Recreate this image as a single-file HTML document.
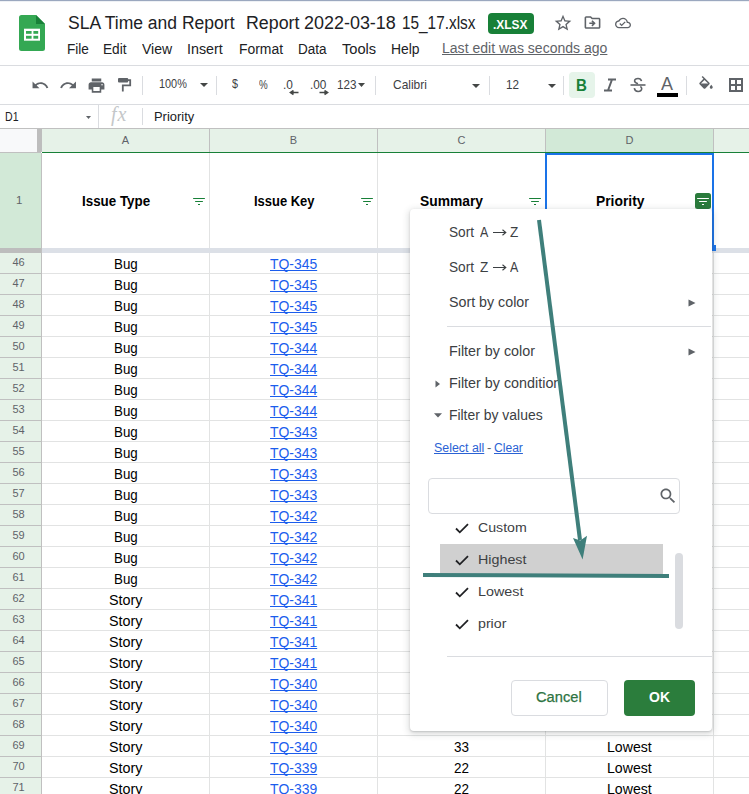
<!DOCTYPE html><html><head><meta charset="utf-8"><style>
html,body{margin:0;padding:0;}
body{width:749px;height:794px;overflow:hidden;position:relative;background:#fff;font-family:"Liberation Sans",sans-serif;}
.t{position:absolute;white-space:nowrap;line-height:1;transform-origin:0 0;}
.r{position:absolute;box-sizing:border-box;}
svg.r{display:block;}
</style></head><body>
<div class="r" style="left:0px;top:0px;width:749px;height:1px;background:#9ba8bf;"></div>
<div class="r" style="left:0px;top:1px;width:749px;height:1px;background:#eef1f5;"></div>
<svg class="r" style="left:19px;top:15px" width="26" height="36" viewBox="0 0 26 36">
<path d="M2.5 0H17L26 9V33.5A2.5 2.5 0 0 1 23.5 36H2.5A2.5 2.5 0 0 1 0 33.5V2.5A2.5 2.5 0 0 1 2.5 0Z" fill="#34a853"/>
<path d="M17 0L26 9H17Z" fill="#188038"/>
<rect x="5" y="13.7" width="16" height="12" fill="#fff"/>
<rect x="7" y="16" width="5.6" height="2.8" fill="#34a853"/>
<rect x="14.4" y="16" width="4.8" height="2.8" fill="#34a853"/>
<rect x="7" y="20.8" width="5.6" height="2.9" fill="#34a853"/>
<rect x="14.4" y="20.8" width="4.8" height="2.9" fill="#34a853"/>
</svg>
<div class="t" style="left:68.40px;top:13px;font-size:19.19px;color:#202124;transform:scaleX(0.9130);">SLA Time and Report</div>
<div class="t" style="left:246.00px;top:13px;font-size:19.19px;color:#202124;transform:scaleX(0.9274);">Report</div>
<div class="t" style="left:304.10px;top:13px;font-size:19.19px;color:#202124;transform:scaleX(0.9354);">2022-03-18</div>
<div class="t" style="left:401.90px;top:13px;font-size:19.19px;color:#202124;transform:scaleX(0.8002);">15_17.xlsx</div>
<div class="r" style="left:488px;top:13px;width:46px;height:21px;background:#188038;border-radius:4px;"></div>
<div class="t" style="left:493.30px;top:18px;font-size:13.23px;font-weight:bold;color:#fff;transform:scaleX(0.8999);">.XLSX</div>
<svg class="r" style="left:552.5px;top:13px" width="20" height="20" viewBox="0 0 24 24"><path fill="#5f6368" d="M22 9.24l-7.19-.62L12 2 9.19 8.63 2 9.24l5.46 4.73L5.82 21 12 17.27 18.18 21l-1.63-7.03L22 9.24zM12 15.4l-3.76 2.27 1-4.28-3.32-2.88 4.38-.38L12 6.1l1.71 4.04 4.38.38-3.32 2.88 1 4.28L12 15.4z"/></svg>
<svg class="r" style="left:583px;top:13px" width="19" height="19" viewBox="0 0 24 24"><path fill="#5f6368" d="M20 6h-8l-2-2H4c-1.1 0-1.99.9-1.99 2L2 18c0 1.1.9 2 2 2h16c1.1 0 2-.9 2-2V8c0-1.1-.9-2-2-2zm0 12H4V6h5.17l2 2H20v10zm-7.84-6H8v2h4.16l-1.59 1.59L11.99 17 16 13.01 11.99 9l-1.41 1.41L12.16 12z"/></svg>
<svg class="r" style="left:614.7px;top:15.3px" width="16" height="16" viewBox="0 0 24 24"><path fill="#5f6368" d="M19.35 10.04C18.67 6.59 15.64 4 12 4 9.11 4 6.6 5.64 5.35 8.04 2.34 8.36 0 10.91 0 14c0 3.31 2.69 6 6 6h13c2.76 0 5-2.24 5-5 0-2.64-2.05-4.78-4.65-4.96zM19 18H6c-2.21 0-4-1.79-4-4 0-2.05 1.53-3.76 3.56-3.97l1.07-.11.5-.95C8.08 7.14 9.94 6 12 6c2.62 0 4.88 1.86 5.39 4.43l.3 1.5 1.53.11c1.56.1 2.78 1.41 2.78 2.96 0 1.65-1.35 3-3 3zm-9-3.82l-2.09-2.09L6.5 13.5 10 17l6.01-6.01-1.41-1.41z"/></svg>
<div class="t" style="left:66.70px;top:42px;font-size:14.53px;color:#202124;transform:scaleX(0.9353);">File</div>
<div class="t" style="left:103.20px;top:42px;font-size:14.53px;color:#202124;transform:scaleX(0.9424);">Edit</div>
<div class="t" style="left:142.00px;top:42px;font-size:14.53px;color:#202124;transform:scaleX(0.9655);">View</div>
<div class="t" style="left:186.80px;top:42px;font-size:14.53px;color:#202124;transform:scaleX(0.9848);">Insert</div>
<div class="t" style="left:238.50px;top:42px;font-size:14.53px;color:#202124;transform:scaleX(0.9580);">Format</div>
<div class="t" style="left:298.10px;top:42px;font-size:14.53px;color:#202124;transform:scaleX(0.9312);">Data</div>
<div class="t" style="left:341.90px;top:42px;font-size:14.53px;color:#202124;transform:scaleX(1.0081);">Tools</div>
<div class="t" style="left:390.70px;top:42px;font-size:14.53px;color:#202124;transform:scaleX(0.9566);">Help</div>
<div class="t" style="left:442.00px;top:41px;font-size:14.53px;color:#5f6368;transform:scaleX(0.9668);text-decoration:underline;text-underline-offset:1px;">Last edit was seconds ago</div>
<div class="r" style="left:0px;top:65px;width:749px;height:1px;background:#dadce0;"></div>
<svg class="r" style="left:30.5px;top:75.8px" width="18.5" height="18.5" viewBox="0 0 24 24"><path fill="#5f6368" d="M12.5 8c-2.65 0-5.05.99-6.9 2.6L2 7v9h9l-3.62-3.62c1.39-1.160 3.16-1.88 5.12-1.88 3.54 0 6.55 2.31 7.6 5.5l2.37-.78C21.08 11.03 17.15 8 12.5 8z"/></svg>
<svg class="r" style="left:59.1px;top:75.8px" width="18.5" height="18.5" viewBox="0 0 24 24"><path fill="#5f6368" d="M18.4 10.6C16.55 8.99 14.15 8 11.5 8c-4.65 0-8.58 3.03-9.96 7.22L3.9 16c1.05-3.19 4.05-5.5 7.6-5.5 1.95 0 3.73.72 5.12 1.88L13 16h9V7l-3.6 3.6z"/></svg>
<svg class="r" style="left:86.5px;top:75.6px" width="19" height="19" viewBox="0 0 24 24"><path fill="#5f6368" d="M19 8H5c-1.66 0-3 1.34-3 3v6h4v4h12v-4h4v-6c0-1.66-1.34-3-3-3zm-3 11H8v-5h8v5zm3-7c-.55 0-1-.45-1-1s.45-1 1-1 1 .45 1 1-.45 1-1 1zm-1-9H6v4h12V3z"/></svg>
<svg class="r" style="left:110px;top:70px" width="30" height="30" viewBox="110 70 30 30"><rect x="118" y="78" width="10.2" height="4.5" rx="1" fill="#5f6368"/><path d="M128 80.2H130.2V85.3H122.8V91.6" stroke="#5f6368" stroke-width="1.8" fill="none"/></svg>
<div class="r" style="left:142px;top:76px;width:1px;height:19px;background:#dadce0;"></div>
<div class="t" style="left:158.90px;top:78px;font-size:12.06px;color:#3c4043;transform:scaleX(0.9041);">100%</div>
<svg class="r" style="left:200px;top:83px" width="8" height="4" viewBox="0 0 8 4"><path d="M0 0H8L4.0 4Z" fill="#444746"/></svg>
<div class="r" style="left:216px;top:76px;width:1px;height:19px;background:#dadce0;"></div>
<div class="t" style="left:232.00px;top:78px;font-size:12.35px;color:#3c4043;transform:scaleX(0.8735);">$</div>
<div class="t" style="left:258.70px;top:79px;font-size:12.06px;color:#3c4043;transform:scaleX(0.8112);">%</div>
<div class="t" style="left:282.60px;top:79px;font-size:12.06px;color:#3c4043;transform:scaleX(0.9840);">.0</div>
<svg class="r" style="left:289px;top:90px" width="10" height="6" viewBox="0 0 10 6"><path d="M9.5 2.5H3M4.5 0.5L1.5 2.5 4.5 4.5" stroke="#444746" stroke-width="1.6" fill="none"/></svg>
<div class="t" style="left:310.00px;top:79px;font-size:12.06px;color:#3c4043;transform:scaleX(0.9780);">.00</div>
<svg class="r" style="left:319px;top:90px" width="10" height="6" viewBox="0 0 10 6"><path d="M0.5 2.5H7M5.5 0.5L8.5 2.5 5.5 4.5" stroke="#444746" stroke-width="1.6" fill="none"/></svg>
<div class="t" style="left:336.80px;top:79px;font-size:12.06px;color:#3c4043;transform:scaleX(0.9691);">123</div>
<svg class="r" style="left:358px;top:83px" width="7" height="4" viewBox="0 0 7 4"><path d="M0 0H7L3.5 4Z" fill="#444746"/></svg>
<div class="r" style="left:375px;top:76px;width:1px;height:19px;background:#dadce0;"></div>
<div class="t" style="left:392.70px;top:78px;font-size:13.00px;color:#3c4043;transform:scaleX(0.9201);">Calibri</div>
<svg class="r" style="left:472px;top:84px" width="8" height="4" viewBox="0 0 8 4"><path d="M0 0H8L4.0 4Z" fill="#444746"/></svg>
<div class="r" style="left:489px;top:76px;width:1px;height:19px;background:#dadce0;"></div>
<div class="t" style="left:506.00px;top:79px;font-size:12.06px;color:#3c4043;transform:scaleX(0.9691);">12</div>
<svg class="r" style="left:548px;top:84px" width="8" height="4" viewBox="0 0 8 4"><path d="M0 0H8L4.0 4Z" fill="#444746"/></svg>
<div class="r" style="left:563px;top:76px;width:1px;height:19px;background:#dadce0;"></div>
<div class="r" style="left:569px;top:72px;width:26px;height:26px;background:#e6f4ea;border-radius:4px;"></div>
<div class="t" style="left:576.40px;top:78px;font-size:15.70px;font-weight:bold;color:#188038;transform:scaleX(0.9617);">B</div>
<svg class="r" style="left:602px;top:78px" width="16" height="14" viewBox="0 0 16 14"><path d="M6 1.5H14M2 12.5H10M10 1.5L6 12.5" stroke="#5f6368" stroke-width="2" fill="none"/></svg>
<svg class="r" style="left:629px;top:77px" width="18" height="16" viewBox="0 0 18 16"><path d="M1.5 8H16.5" stroke="#5f6368" stroke-width="1.6"/><path d="M12.5 4.2C12.2 2.6 10.9 1.5 9 1.5 7 1.5 5.6 2.6 5.6 4.1 5.6 5.5 6.7 6.1 9 6.7M5.3 11.2C5.6 13 7 14.5 9.1 14.5 11.3 14.5 12.7 13.3 12.7 11.6 12.7 10.7 12.3 10 11.3 9.5" stroke="#5f6368" stroke-width="1.6" fill="none"/></svg>
<div class="t" style="left:661.00px;top:76px;font-size:17.44px;color:#5f6368;transform:scaleX(1.0315);">A</div>
<div class="r" style="left:657px;top:93px;width:21px;height:4px;background:#000;"></div>
<div class="r" style="left:686px;top:76px;width:1px;height:19px;background:#dadce0;"></div>
<svg class="r" style="left:697px;top:76px" width="18" height="18" viewBox="0 0 24 24"><path fill="#5f6368" d="M16.56 8.94L7.62 0 6.21 1.41l2.38 2.38-5.15 5.15c-.59.59-.59 1.54 0 2.12l5.5 5.5c.29.29.68.44 1.06.44s.77-.15 1.06-.44l5.5-5.5c.59-.58.59-1.53 0-2.12zM5.21 10L10 5.21 14.79 10H5.21zM19 11.5s-2 2.17-2 3.5c0 1.1.9 2 2 2s2-.9 2-2c0-1.33-2-3.5-2-3.5z"/></svg>
<svg class="r" style="left:729px;top:78px" width="14" height="14" viewBox="0 0 14 14"><path d="M1 1H13V13H1Z M7 1V13 M1 7H13" stroke="#5f6368" stroke-width="2" fill="none"/></svg>
<div class="r" style="left:0px;top:104px;width:749px;height:1px;background:#dadce0;"></div>
<div class="t" style="left:4.70px;top:110px;font-size:13.08px;color:#202124;transform:scaleX(0.8075);">D1</div>
<svg class="r" style="left:86px;top:116px" width="5" height="3" viewBox="0 0 5 3"><path d="M0 0H5L2.5 3Z" fill="#5f6368"/></svg>
<div class="r" style="left:98px;top:105px;width:1px;height:23px;background:#dadce0;"></div>
<div class="t" style="left:111px;top:104px;font-size:20px;letter-spacing:1px;line-height:1;color:#c4c7c9;font-family:'Liberation Serif',serif;font-style:italic;">fx</div>
<div class="r" style="left:142px;top:108px;width:1px;height:17px;background:#dadce0;"></div>
<div class="t" style="left:153.80px;top:110px;font-size:13.08px;color:#202124;transform:scaleX(0.9878);">Priority</div>
<div class="r" style="left:0px;top:128px;width:749px;height:1px;background:#c0c0c0;"></div>
<div class="r" style="left:0px;top:129px;width:37px;height:23px;background:#f8f9fa;"></div>
<div class="r" style="left:37px;top:129px;width:5px;height:23px;background:#bdbdbd;"></div>
<div class="r" style="left:42px;top:129px;width:707px;height:23px;background:#e6f2e8;"></div>
<div class="r" style="left:546px;top:129px;width:167px;height:23px;background:#d2e9d7;"></div>
<div class="r" style="left:209px;top:129px;width:1px;height:23px;background:#c0c0c0;"></div>
<div class="r" style="left:377px;top:129px;width:1px;height:23px;background:#c0c0c0;"></div>
<div class="r" style="left:545px;top:129px;width:1px;height:23px;background:#c0c0c0;"></div>
<div class="r" style="left:713px;top:129px;width:1px;height:23px;background:#c0c0c0;"></div>
<div class="r" style="left:0px;top:152px;width:41px;height:1px;background:#c0c0c0;"></div>
<div class="r" style="left:42px;top:152px;width:707px;height:1px;background:#188038;"></div>
<div class="t" style="left:121.83px;top:135px;font-size:11.00px;color:#5f6368;">A</div>
<div class="t" style="left:289.83px;top:135px;font-size:11.00px;color:#5f6368;">B</div>
<div class="t" style="left:457.53px;top:135px;font-size:11.00px;color:#5f6368;">C</div>
<div class="t" style="left:625.53px;top:135px;font-size:11.00px;color:#5f6368;">D</div>
<div class="r" style="left:0px;top:153px;width:41px;height:95px;background:#d2e9d7;"></div>
<div class="r" style="left:41px;top:153px;width:1px;height:95px;background:#c0c0c0;"></div>
<div class="r" style="left:209px;top:153px;width:1px;height:95px;background:#e2e3e3;"></div>
<div class="r" style="left:377px;top:153px;width:1px;height:95px;background:#e2e3e3;"></div>
<div class="r" style="left:545px;top:153px;width:1px;height:95px;background:#e2e3e3;"></div>
<div class="r" style="left:713px;top:153px;width:1px;height:95px;background:#e2e3e3;"></div>
<div class="t" style="left:15.90px;top:195px;font-size:11.50px;color:#5f6368;">1</div>
<div class="t" style="left:81.60px;top:194px;font-size:14.24px;font-weight:bold;color:#000;transform:scaleX(0.9397);">Issue Type</div>
<div class="t" style="left:253.60px;top:194px;font-size:14.24px;font-weight:bold;color:#000;transform:scaleX(0.9097);">Issue Key</div>
<div class="t" style="left:420.00px;top:194px;font-size:14.24px;font-weight:bold;color:#000;transform:scaleX(0.9719);">Summary</div>
<div class="t" style="left:595.60px;top:194px;font-size:14.24px;font-weight:bold;color:#000;transform:scaleX(0.9726);">Priority</div>
<div class="r" style="left:193px;top:198px;width:12px;height:1px;background:#188038;border-radius:1px;"></div>
<div class="r" style="left:195px;top:201px;width:8px;height:1px;background:#188038;border-radius:1px;"></div>
<div class="r" style="left:198px;top:204px;width:2px;height:1px;background:#188038;"></div>
<div class="r" style="left:361px;top:198px;width:12px;height:1px;background:#188038;border-radius:1px;"></div>
<div class="r" style="left:363px;top:201px;width:8px;height:1px;background:#188038;border-radius:1px;"></div>
<div class="r" style="left:366px;top:204px;width:2px;height:1px;background:#188038;"></div>
<div class="r" style="left:529px;top:198px;width:12px;height:1px;background:#188038;border-radius:1px;"></div>
<div class="r" style="left:531px;top:201px;width:8px;height:1px;background:#188038;border-radius:1px;"></div>
<div class="r" style="left:534px;top:204px;width:2px;height:1px;background:#188038;"></div>
<div class="r" style="left:695px;top:193px;width:16px;height:16px;background:#2a7b3c;border-radius:2.5px;"></div>
<div class="r" style="left:697px;top:198px;width:12px;height:1px;background:#fff;border-radius:1px;"></div>
<div class="r" style="left:699px;top:201px;width:8px;height:1px;background:#fff;border-radius:1px;"></div>
<div class="r" style="left:702px;top:204px;width:2px;height:1px;background:#fff;"></div>
<div class="r" style="left:0px;top:248px;width:41px;height:5px;background:#bdbdbd;"></div>
<div class="r" style="left:41px;top:248px;width:708px;height:5px;background:#dce0e7;"></div>
<div class="r" style="left:41px;top:248px;width:1px;height:5px;background:#c0c0c0;"></div>
<div class="r" style="left:545px;top:153px;width:2px;height:95px;background:#1a73e8;"></div>
<div class="r" style="left:712px;top:153px;width:2px;height:95px;background:#1a73e8;"></div>
<div class="r" style="left:545px;top:153px;width:169px;height:2px;background:#1a73e8;"></div>
<div class="r" style="left:712px;top:245px;width:4px;height:6px;background:#1a73e8;"></div>
<div class="r" style="left:0px;top:253px;width:41px;height:20px;background:#e6f2e8;"></div>
<div class="r" style="left:0px;top:273px;width:41px;height:1px;background:#c0c0c0;"></div>
<div class="r" style="left:41px;top:253px;width:1px;height:21px;background:#c0c0c0;"></div>
<div class="r" style="left:42px;top:273px;width:707px;height:1px;background:#e2e3e3;"></div>
<div class="r" style="left:209px;top:253px;width:1px;height:20px;background:#e2e3e3;"></div>
<div class="r" style="left:377px;top:253px;width:1px;height:20px;background:#e2e3e3;"></div>
<div class="r" style="left:545px;top:253px;width:1px;height:20px;background:#e2e3e3;"></div>
<div class="r" style="left:713px;top:253px;width:1px;height:20px;background:#e2e3e3;"></div>
<div class="t" style="left:12.38px;top:257px;font-size:11.00px;color:#5f6368;">46</div>
<div class="r" style="left:0px;top:274px;width:41px;height:20px;background:#e6f2e8;"></div>
<div class="r" style="left:0px;top:294px;width:41px;height:1px;background:#c0c0c0;"></div>
<div class="r" style="left:41px;top:274px;width:1px;height:21px;background:#c0c0c0;"></div>
<div class="r" style="left:42px;top:294px;width:707px;height:1px;background:#e2e3e3;"></div>
<div class="r" style="left:209px;top:274px;width:1px;height:20px;background:#e2e3e3;"></div>
<div class="r" style="left:377px;top:274px;width:1px;height:20px;background:#e2e3e3;"></div>
<div class="r" style="left:545px;top:274px;width:1px;height:20px;background:#e2e3e3;"></div>
<div class="r" style="left:713px;top:274px;width:1px;height:20px;background:#e2e3e3;"></div>
<div class="t" style="left:12.38px;top:278px;font-size:11.00px;color:#5f6368;">47</div>
<div class="r" style="left:0px;top:295px;width:41px;height:20px;background:#e6f2e8;"></div>
<div class="r" style="left:0px;top:315px;width:41px;height:1px;background:#c0c0c0;"></div>
<div class="r" style="left:41px;top:295px;width:1px;height:21px;background:#c0c0c0;"></div>
<div class="r" style="left:42px;top:315px;width:707px;height:1px;background:#e2e3e3;"></div>
<div class="r" style="left:209px;top:295px;width:1px;height:20px;background:#e2e3e3;"></div>
<div class="r" style="left:377px;top:295px;width:1px;height:20px;background:#e2e3e3;"></div>
<div class="r" style="left:545px;top:295px;width:1px;height:20px;background:#e2e3e3;"></div>
<div class="r" style="left:713px;top:295px;width:1px;height:20px;background:#e2e3e3;"></div>
<div class="t" style="left:12.38px;top:299px;font-size:11.00px;color:#5f6368;">48</div>
<div class="r" style="left:0px;top:316px;width:41px;height:20px;background:#e6f2e8;"></div>
<div class="r" style="left:0px;top:336px;width:41px;height:1px;background:#c0c0c0;"></div>
<div class="r" style="left:41px;top:316px;width:1px;height:21px;background:#c0c0c0;"></div>
<div class="r" style="left:42px;top:336px;width:707px;height:1px;background:#e2e3e3;"></div>
<div class="r" style="left:209px;top:316px;width:1px;height:20px;background:#e2e3e3;"></div>
<div class="r" style="left:377px;top:316px;width:1px;height:20px;background:#e2e3e3;"></div>
<div class="r" style="left:545px;top:316px;width:1px;height:20px;background:#e2e3e3;"></div>
<div class="r" style="left:713px;top:316px;width:1px;height:20px;background:#e2e3e3;"></div>
<div class="t" style="left:12.38px;top:320px;font-size:11.00px;color:#5f6368;">49</div>
<div class="r" style="left:0px;top:337px;width:41px;height:20px;background:#e6f2e8;"></div>
<div class="r" style="left:0px;top:357px;width:41px;height:1px;background:#c0c0c0;"></div>
<div class="r" style="left:41px;top:337px;width:1px;height:21px;background:#c0c0c0;"></div>
<div class="r" style="left:42px;top:357px;width:707px;height:1px;background:#e2e3e3;"></div>
<div class="r" style="left:209px;top:337px;width:1px;height:20px;background:#e2e3e3;"></div>
<div class="r" style="left:377px;top:337px;width:1px;height:20px;background:#e2e3e3;"></div>
<div class="r" style="left:545px;top:337px;width:1px;height:20px;background:#e2e3e3;"></div>
<div class="r" style="left:713px;top:337px;width:1px;height:20px;background:#e2e3e3;"></div>
<div class="t" style="left:12.38px;top:341px;font-size:11.00px;color:#5f6368;">50</div>
<div class="r" style="left:0px;top:358px;width:41px;height:20px;background:#e6f2e8;"></div>
<div class="r" style="left:0px;top:378px;width:41px;height:1px;background:#c0c0c0;"></div>
<div class="r" style="left:41px;top:358px;width:1px;height:21px;background:#c0c0c0;"></div>
<div class="r" style="left:42px;top:378px;width:707px;height:1px;background:#e2e3e3;"></div>
<div class="r" style="left:209px;top:358px;width:1px;height:20px;background:#e2e3e3;"></div>
<div class="r" style="left:377px;top:358px;width:1px;height:20px;background:#e2e3e3;"></div>
<div class="r" style="left:545px;top:358px;width:1px;height:20px;background:#e2e3e3;"></div>
<div class="r" style="left:713px;top:358px;width:1px;height:20px;background:#e2e3e3;"></div>
<div class="t" style="left:12.38px;top:362px;font-size:11.00px;color:#5f6368;">51</div>
<div class="r" style="left:0px;top:379px;width:41px;height:20px;background:#e6f2e8;"></div>
<div class="r" style="left:0px;top:399px;width:41px;height:1px;background:#c0c0c0;"></div>
<div class="r" style="left:41px;top:379px;width:1px;height:21px;background:#c0c0c0;"></div>
<div class="r" style="left:42px;top:399px;width:707px;height:1px;background:#e2e3e3;"></div>
<div class="r" style="left:209px;top:379px;width:1px;height:20px;background:#e2e3e3;"></div>
<div class="r" style="left:377px;top:379px;width:1px;height:20px;background:#e2e3e3;"></div>
<div class="r" style="left:545px;top:379px;width:1px;height:20px;background:#e2e3e3;"></div>
<div class="r" style="left:713px;top:379px;width:1px;height:20px;background:#e2e3e3;"></div>
<div class="t" style="left:12.38px;top:383px;font-size:11.00px;color:#5f6368;">52</div>
<div class="r" style="left:0px;top:400px;width:41px;height:20px;background:#e6f2e8;"></div>
<div class="r" style="left:0px;top:420px;width:41px;height:1px;background:#c0c0c0;"></div>
<div class="r" style="left:41px;top:400px;width:1px;height:21px;background:#c0c0c0;"></div>
<div class="r" style="left:42px;top:420px;width:707px;height:1px;background:#e2e3e3;"></div>
<div class="r" style="left:209px;top:400px;width:1px;height:20px;background:#e2e3e3;"></div>
<div class="r" style="left:377px;top:400px;width:1px;height:20px;background:#e2e3e3;"></div>
<div class="r" style="left:545px;top:400px;width:1px;height:20px;background:#e2e3e3;"></div>
<div class="r" style="left:713px;top:400px;width:1px;height:20px;background:#e2e3e3;"></div>
<div class="t" style="left:12.38px;top:404px;font-size:11.00px;color:#5f6368;">53</div>
<div class="r" style="left:0px;top:421px;width:41px;height:20px;background:#e6f2e8;"></div>
<div class="r" style="left:0px;top:441px;width:41px;height:1px;background:#c0c0c0;"></div>
<div class="r" style="left:41px;top:421px;width:1px;height:21px;background:#c0c0c0;"></div>
<div class="r" style="left:42px;top:441px;width:707px;height:1px;background:#e2e3e3;"></div>
<div class="r" style="left:209px;top:421px;width:1px;height:20px;background:#e2e3e3;"></div>
<div class="r" style="left:377px;top:421px;width:1px;height:20px;background:#e2e3e3;"></div>
<div class="r" style="left:545px;top:421px;width:1px;height:20px;background:#e2e3e3;"></div>
<div class="r" style="left:713px;top:421px;width:1px;height:20px;background:#e2e3e3;"></div>
<div class="t" style="left:12.38px;top:425px;font-size:11.00px;color:#5f6368;">54</div>
<div class="r" style="left:0px;top:442px;width:41px;height:20px;background:#e6f2e8;"></div>
<div class="r" style="left:0px;top:462px;width:41px;height:1px;background:#c0c0c0;"></div>
<div class="r" style="left:41px;top:442px;width:1px;height:21px;background:#c0c0c0;"></div>
<div class="r" style="left:42px;top:462px;width:707px;height:1px;background:#e2e3e3;"></div>
<div class="r" style="left:209px;top:442px;width:1px;height:20px;background:#e2e3e3;"></div>
<div class="r" style="left:377px;top:442px;width:1px;height:20px;background:#e2e3e3;"></div>
<div class="r" style="left:545px;top:442px;width:1px;height:20px;background:#e2e3e3;"></div>
<div class="r" style="left:713px;top:442px;width:1px;height:20px;background:#e2e3e3;"></div>
<div class="t" style="left:12.38px;top:446px;font-size:11.00px;color:#5f6368;">55</div>
<div class="r" style="left:0px;top:463px;width:41px;height:20px;background:#e6f2e8;"></div>
<div class="r" style="left:0px;top:483px;width:41px;height:1px;background:#c0c0c0;"></div>
<div class="r" style="left:41px;top:463px;width:1px;height:21px;background:#c0c0c0;"></div>
<div class="r" style="left:42px;top:483px;width:707px;height:1px;background:#e2e3e3;"></div>
<div class="r" style="left:209px;top:463px;width:1px;height:20px;background:#e2e3e3;"></div>
<div class="r" style="left:377px;top:463px;width:1px;height:20px;background:#e2e3e3;"></div>
<div class="r" style="left:545px;top:463px;width:1px;height:20px;background:#e2e3e3;"></div>
<div class="r" style="left:713px;top:463px;width:1px;height:20px;background:#e2e3e3;"></div>
<div class="t" style="left:12.38px;top:467px;font-size:11.00px;color:#5f6368;">56</div>
<div class="r" style="left:0px;top:484px;width:41px;height:20px;background:#e6f2e8;"></div>
<div class="r" style="left:0px;top:504px;width:41px;height:1px;background:#c0c0c0;"></div>
<div class="r" style="left:41px;top:484px;width:1px;height:21px;background:#c0c0c0;"></div>
<div class="r" style="left:42px;top:504px;width:707px;height:1px;background:#e2e3e3;"></div>
<div class="r" style="left:209px;top:484px;width:1px;height:20px;background:#e2e3e3;"></div>
<div class="r" style="left:377px;top:484px;width:1px;height:20px;background:#e2e3e3;"></div>
<div class="r" style="left:545px;top:484px;width:1px;height:20px;background:#e2e3e3;"></div>
<div class="r" style="left:713px;top:484px;width:1px;height:20px;background:#e2e3e3;"></div>
<div class="t" style="left:12.38px;top:488px;font-size:11.00px;color:#5f6368;">57</div>
<div class="r" style="left:0px;top:505px;width:41px;height:20px;background:#e6f2e8;"></div>
<div class="r" style="left:0px;top:525px;width:41px;height:1px;background:#c0c0c0;"></div>
<div class="r" style="left:41px;top:505px;width:1px;height:21px;background:#c0c0c0;"></div>
<div class="r" style="left:42px;top:525px;width:707px;height:1px;background:#e2e3e3;"></div>
<div class="r" style="left:209px;top:505px;width:1px;height:20px;background:#e2e3e3;"></div>
<div class="r" style="left:377px;top:505px;width:1px;height:20px;background:#e2e3e3;"></div>
<div class="r" style="left:545px;top:505px;width:1px;height:20px;background:#e2e3e3;"></div>
<div class="r" style="left:713px;top:505px;width:1px;height:20px;background:#e2e3e3;"></div>
<div class="t" style="left:12.38px;top:509px;font-size:11.00px;color:#5f6368;">58</div>
<div class="r" style="left:0px;top:526px;width:41px;height:20px;background:#e6f2e8;"></div>
<div class="r" style="left:0px;top:546px;width:41px;height:1px;background:#c0c0c0;"></div>
<div class="r" style="left:41px;top:526px;width:1px;height:21px;background:#c0c0c0;"></div>
<div class="r" style="left:42px;top:546px;width:707px;height:1px;background:#e2e3e3;"></div>
<div class="r" style="left:209px;top:526px;width:1px;height:20px;background:#e2e3e3;"></div>
<div class="r" style="left:377px;top:526px;width:1px;height:20px;background:#e2e3e3;"></div>
<div class="r" style="left:545px;top:526px;width:1px;height:20px;background:#e2e3e3;"></div>
<div class="r" style="left:713px;top:526px;width:1px;height:20px;background:#e2e3e3;"></div>
<div class="t" style="left:12.38px;top:530px;font-size:11.00px;color:#5f6368;">59</div>
<div class="r" style="left:0px;top:547px;width:41px;height:20px;background:#e6f2e8;"></div>
<div class="r" style="left:0px;top:567px;width:41px;height:1px;background:#c0c0c0;"></div>
<div class="r" style="left:41px;top:547px;width:1px;height:21px;background:#c0c0c0;"></div>
<div class="r" style="left:42px;top:567px;width:707px;height:1px;background:#e2e3e3;"></div>
<div class="r" style="left:209px;top:547px;width:1px;height:20px;background:#e2e3e3;"></div>
<div class="r" style="left:377px;top:547px;width:1px;height:20px;background:#e2e3e3;"></div>
<div class="r" style="left:545px;top:547px;width:1px;height:20px;background:#e2e3e3;"></div>
<div class="r" style="left:713px;top:547px;width:1px;height:20px;background:#e2e3e3;"></div>
<div class="t" style="left:12.38px;top:551px;font-size:11.00px;color:#5f6368;">60</div>
<div class="r" style="left:0px;top:568px;width:41px;height:20px;background:#e6f2e8;"></div>
<div class="r" style="left:0px;top:588px;width:41px;height:1px;background:#c0c0c0;"></div>
<div class="r" style="left:41px;top:568px;width:1px;height:21px;background:#c0c0c0;"></div>
<div class="r" style="left:42px;top:588px;width:707px;height:1px;background:#e2e3e3;"></div>
<div class="r" style="left:209px;top:568px;width:1px;height:20px;background:#e2e3e3;"></div>
<div class="r" style="left:377px;top:568px;width:1px;height:20px;background:#e2e3e3;"></div>
<div class="r" style="left:545px;top:568px;width:1px;height:20px;background:#e2e3e3;"></div>
<div class="r" style="left:713px;top:568px;width:1px;height:20px;background:#e2e3e3;"></div>
<div class="t" style="left:12.38px;top:572px;font-size:11.00px;color:#5f6368;">61</div>
<div class="r" style="left:0px;top:589px;width:41px;height:20px;background:#e6f2e8;"></div>
<div class="r" style="left:0px;top:609px;width:41px;height:1px;background:#c0c0c0;"></div>
<div class="r" style="left:41px;top:589px;width:1px;height:21px;background:#c0c0c0;"></div>
<div class="r" style="left:42px;top:609px;width:707px;height:1px;background:#e2e3e3;"></div>
<div class="r" style="left:209px;top:589px;width:1px;height:20px;background:#e2e3e3;"></div>
<div class="r" style="left:377px;top:589px;width:1px;height:20px;background:#e2e3e3;"></div>
<div class="r" style="left:545px;top:589px;width:1px;height:20px;background:#e2e3e3;"></div>
<div class="r" style="left:713px;top:589px;width:1px;height:20px;background:#e2e3e3;"></div>
<div class="t" style="left:12.38px;top:593px;font-size:11.00px;color:#5f6368;">62</div>
<div class="r" style="left:0px;top:610px;width:41px;height:20px;background:#e6f2e8;"></div>
<div class="r" style="left:0px;top:630px;width:41px;height:1px;background:#c0c0c0;"></div>
<div class="r" style="left:41px;top:610px;width:1px;height:21px;background:#c0c0c0;"></div>
<div class="r" style="left:42px;top:630px;width:707px;height:1px;background:#e2e3e3;"></div>
<div class="r" style="left:209px;top:610px;width:1px;height:20px;background:#e2e3e3;"></div>
<div class="r" style="left:377px;top:610px;width:1px;height:20px;background:#e2e3e3;"></div>
<div class="r" style="left:545px;top:610px;width:1px;height:20px;background:#e2e3e3;"></div>
<div class="r" style="left:713px;top:610px;width:1px;height:20px;background:#e2e3e3;"></div>
<div class="t" style="left:12.38px;top:614px;font-size:11.00px;color:#5f6368;">63</div>
<div class="r" style="left:0px;top:631px;width:41px;height:20px;background:#e6f2e8;"></div>
<div class="r" style="left:0px;top:651px;width:41px;height:1px;background:#c0c0c0;"></div>
<div class="r" style="left:41px;top:631px;width:1px;height:21px;background:#c0c0c0;"></div>
<div class="r" style="left:42px;top:651px;width:707px;height:1px;background:#e2e3e3;"></div>
<div class="r" style="left:209px;top:631px;width:1px;height:20px;background:#e2e3e3;"></div>
<div class="r" style="left:377px;top:631px;width:1px;height:20px;background:#e2e3e3;"></div>
<div class="r" style="left:545px;top:631px;width:1px;height:20px;background:#e2e3e3;"></div>
<div class="r" style="left:713px;top:631px;width:1px;height:20px;background:#e2e3e3;"></div>
<div class="t" style="left:12.38px;top:635px;font-size:11.00px;color:#5f6368;">64</div>
<div class="r" style="left:0px;top:652px;width:41px;height:20px;background:#e6f2e8;"></div>
<div class="r" style="left:0px;top:672px;width:41px;height:1px;background:#c0c0c0;"></div>
<div class="r" style="left:41px;top:652px;width:1px;height:21px;background:#c0c0c0;"></div>
<div class="r" style="left:42px;top:672px;width:707px;height:1px;background:#e2e3e3;"></div>
<div class="r" style="left:209px;top:652px;width:1px;height:20px;background:#e2e3e3;"></div>
<div class="r" style="left:377px;top:652px;width:1px;height:20px;background:#e2e3e3;"></div>
<div class="r" style="left:545px;top:652px;width:1px;height:20px;background:#e2e3e3;"></div>
<div class="r" style="left:713px;top:652px;width:1px;height:20px;background:#e2e3e3;"></div>
<div class="t" style="left:12.38px;top:656px;font-size:11.00px;color:#5f6368;">65</div>
<div class="r" style="left:0px;top:673px;width:41px;height:20px;background:#e6f2e8;"></div>
<div class="r" style="left:0px;top:693px;width:41px;height:1px;background:#c0c0c0;"></div>
<div class="r" style="left:41px;top:673px;width:1px;height:21px;background:#c0c0c0;"></div>
<div class="r" style="left:42px;top:693px;width:707px;height:1px;background:#e2e3e3;"></div>
<div class="r" style="left:209px;top:673px;width:1px;height:20px;background:#e2e3e3;"></div>
<div class="r" style="left:377px;top:673px;width:1px;height:20px;background:#e2e3e3;"></div>
<div class="r" style="left:545px;top:673px;width:1px;height:20px;background:#e2e3e3;"></div>
<div class="r" style="left:713px;top:673px;width:1px;height:20px;background:#e2e3e3;"></div>
<div class="t" style="left:12.38px;top:677px;font-size:11.00px;color:#5f6368;">66</div>
<div class="r" style="left:0px;top:694px;width:41px;height:20px;background:#e6f2e8;"></div>
<div class="r" style="left:0px;top:714px;width:41px;height:1px;background:#c0c0c0;"></div>
<div class="r" style="left:41px;top:694px;width:1px;height:21px;background:#c0c0c0;"></div>
<div class="r" style="left:42px;top:714px;width:707px;height:1px;background:#e2e3e3;"></div>
<div class="r" style="left:209px;top:694px;width:1px;height:20px;background:#e2e3e3;"></div>
<div class="r" style="left:377px;top:694px;width:1px;height:20px;background:#e2e3e3;"></div>
<div class="r" style="left:545px;top:694px;width:1px;height:20px;background:#e2e3e3;"></div>
<div class="r" style="left:713px;top:694px;width:1px;height:20px;background:#e2e3e3;"></div>
<div class="t" style="left:12.38px;top:698px;font-size:11.00px;color:#5f6368;">67</div>
<div class="r" style="left:0px;top:715px;width:41px;height:20px;background:#e6f2e8;"></div>
<div class="r" style="left:0px;top:735px;width:41px;height:1px;background:#c0c0c0;"></div>
<div class="r" style="left:41px;top:715px;width:1px;height:21px;background:#c0c0c0;"></div>
<div class="r" style="left:42px;top:735px;width:707px;height:1px;background:#e2e3e3;"></div>
<div class="r" style="left:209px;top:715px;width:1px;height:20px;background:#e2e3e3;"></div>
<div class="r" style="left:377px;top:715px;width:1px;height:20px;background:#e2e3e3;"></div>
<div class="r" style="left:545px;top:715px;width:1px;height:20px;background:#e2e3e3;"></div>
<div class="r" style="left:713px;top:715px;width:1px;height:20px;background:#e2e3e3;"></div>
<div class="t" style="left:12.38px;top:719px;font-size:11.00px;color:#5f6368;">68</div>
<div class="r" style="left:0px;top:736px;width:41px;height:20px;background:#e6f2e8;"></div>
<div class="r" style="left:0px;top:756px;width:41px;height:1px;background:#c0c0c0;"></div>
<div class="r" style="left:41px;top:736px;width:1px;height:21px;background:#c0c0c0;"></div>
<div class="r" style="left:42px;top:756px;width:707px;height:1px;background:#e2e3e3;"></div>
<div class="r" style="left:209px;top:736px;width:1px;height:20px;background:#e2e3e3;"></div>
<div class="r" style="left:377px;top:736px;width:1px;height:20px;background:#e2e3e3;"></div>
<div class="r" style="left:545px;top:736px;width:1px;height:20px;background:#e2e3e3;"></div>
<div class="r" style="left:713px;top:736px;width:1px;height:20px;background:#e2e3e3;"></div>
<div class="t" style="left:12.38px;top:740px;font-size:11.00px;color:#5f6368;">69</div>
<div class="r" style="left:0px;top:757px;width:41px;height:20px;background:#e6f2e8;"></div>
<div class="r" style="left:0px;top:777px;width:41px;height:1px;background:#c0c0c0;"></div>
<div class="r" style="left:41px;top:757px;width:1px;height:21px;background:#c0c0c0;"></div>
<div class="r" style="left:42px;top:777px;width:707px;height:1px;background:#e2e3e3;"></div>
<div class="r" style="left:209px;top:757px;width:1px;height:20px;background:#e2e3e3;"></div>
<div class="r" style="left:377px;top:757px;width:1px;height:20px;background:#e2e3e3;"></div>
<div class="r" style="left:545px;top:757px;width:1px;height:20px;background:#e2e3e3;"></div>
<div class="r" style="left:713px;top:757px;width:1px;height:20px;background:#e2e3e3;"></div>
<div class="t" style="left:12.38px;top:761px;font-size:11.00px;color:#5f6368;">70</div>
<div class="r" style="left:0px;top:778px;width:41px;height:20px;background:#e6f2e8;"></div>
<div class="r" style="left:0px;top:798px;width:41px;height:1px;background:#c0c0c0;"></div>
<div class="r" style="left:41px;top:778px;width:1px;height:21px;background:#c0c0c0;"></div>
<div class="r" style="left:42px;top:798px;width:707px;height:1px;background:#e2e3e3;"></div>
<div class="r" style="left:209px;top:778px;width:1px;height:20px;background:#e2e3e3;"></div>
<div class="r" style="left:377px;top:778px;width:1px;height:20px;background:#e2e3e3;"></div>
<div class="r" style="left:545px;top:778px;width:1px;height:20px;background:#e2e3e3;"></div>
<div class="r" style="left:713px;top:778px;width:1px;height:20px;background:#e2e3e3;"></div>
<div class="t" style="left:12.38px;top:782px;font-size:11.00px;color:#5f6368;">71</div>
<div class="t" style="left:113.80px;top:257px;font-size:14.83px;color:#000;transform:scaleX(0.8986);">Bug</div>
<div class="t" style="left:269.80px;top:257px;font-size:14.24px;color:#1b5ded;transform:scaleX(0.9775);text-decoration:underline;text-decoration-skip-ink:none;">TQ-345</div>
<div class="t" style="left:113.80px;top:278px;font-size:14.83px;color:#000;transform:scaleX(0.8986);">Bug</div>
<div class="t" style="left:269.80px;top:278px;font-size:14.24px;color:#1b5ded;transform:scaleX(0.9775);text-decoration:underline;text-decoration-skip-ink:none;">TQ-345</div>
<div class="t" style="left:113.80px;top:299px;font-size:14.83px;color:#000;transform:scaleX(0.8986);">Bug</div>
<div class="t" style="left:269.80px;top:299px;font-size:14.24px;color:#1b5ded;transform:scaleX(0.9775);text-decoration:underline;text-decoration-skip-ink:none;">TQ-345</div>
<div class="t" style="left:113.80px;top:320px;font-size:14.83px;color:#000;transform:scaleX(0.8986);">Bug</div>
<div class="t" style="left:269.80px;top:320px;font-size:14.24px;color:#1b5ded;transform:scaleX(0.9775);text-decoration:underline;text-decoration-skip-ink:none;">TQ-345</div>
<div class="t" style="left:113.80px;top:341px;font-size:14.83px;color:#000;transform:scaleX(0.8986);">Bug</div>
<div class="t" style="left:269.80px;top:341px;font-size:14.24px;color:#1b5ded;transform:scaleX(0.9775);text-decoration:underline;text-decoration-skip-ink:none;">TQ-344</div>
<div class="t" style="left:113.80px;top:362px;font-size:14.83px;color:#000;transform:scaleX(0.8986);">Bug</div>
<div class="t" style="left:269.80px;top:362px;font-size:14.24px;color:#1b5ded;transform:scaleX(0.9775);text-decoration:underline;text-decoration-skip-ink:none;">TQ-344</div>
<div class="t" style="left:113.80px;top:383px;font-size:14.83px;color:#000;transform:scaleX(0.8986);">Bug</div>
<div class="t" style="left:269.80px;top:383px;font-size:14.24px;color:#1b5ded;transform:scaleX(0.9775);text-decoration:underline;text-decoration-skip-ink:none;">TQ-344</div>
<div class="t" style="left:113.80px;top:404px;font-size:14.83px;color:#000;transform:scaleX(0.8986);">Bug</div>
<div class="t" style="left:269.80px;top:404px;font-size:14.24px;color:#1b5ded;transform:scaleX(0.9775);text-decoration:underline;text-decoration-skip-ink:none;">TQ-344</div>
<div class="t" style="left:113.80px;top:425px;font-size:14.83px;color:#000;transform:scaleX(0.8986);">Bug</div>
<div class="t" style="left:269.80px;top:425px;font-size:14.24px;color:#1b5ded;transform:scaleX(0.9775);text-decoration:underline;text-decoration-skip-ink:none;">TQ-343</div>
<div class="t" style="left:113.80px;top:446px;font-size:14.83px;color:#000;transform:scaleX(0.8986);">Bug</div>
<div class="t" style="left:269.80px;top:446px;font-size:14.24px;color:#1b5ded;transform:scaleX(0.9775);text-decoration:underline;text-decoration-skip-ink:none;">TQ-343</div>
<div class="t" style="left:113.80px;top:467px;font-size:14.83px;color:#000;transform:scaleX(0.8986);">Bug</div>
<div class="t" style="left:269.80px;top:467px;font-size:14.24px;color:#1b5ded;transform:scaleX(0.9775);text-decoration:underline;text-decoration-skip-ink:none;">TQ-343</div>
<div class="t" style="left:113.80px;top:488px;font-size:14.83px;color:#000;transform:scaleX(0.8986);">Bug</div>
<div class="t" style="left:269.80px;top:488px;font-size:14.24px;color:#1b5ded;transform:scaleX(0.9775);text-decoration:underline;text-decoration-skip-ink:none;">TQ-343</div>
<div class="t" style="left:113.80px;top:509px;font-size:14.83px;color:#000;transform:scaleX(0.8986);">Bug</div>
<div class="t" style="left:269.80px;top:509px;font-size:14.24px;color:#1b5ded;transform:scaleX(0.9775);text-decoration:underline;text-decoration-skip-ink:none;">TQ-342</div>
<div class="t" style="left:113.80px;top:530px;font-size:14.83px;color:#000;transform:scaleX(0.8986);">Bug</div>
<div class="t" style="left:269.80px;top:530px;font-size:14.24px;color:#1b5ded;transform:scaleX(0.9775);text-decoration:underline;text-decoration-skip-ink:none;">TQ-342</div>
<div class="t" style="left:113.80px;top:551px;font-size:14.83px;color:#000;transform:scaleX(0.8986);">Bug</div>
<div class="t" style="left:269.80px;top:551px;font-size:14.24px;color:#1b5ded;transform:scaleX(0.9775);text-decoration:underline;text-decoration-skip-ink:none;">TQ-342</div>
<div class="t" style="left:113.80px;top:572px;font-size:14.83px;color:#000;transform:scaleX(0.8986);">Bug</div>
<div class="t" style="left:269.80px;top:572px;font-size:14.24px;color:#1b5ded;transform:scaleX(0.9775);text-decoration:underline;text-decoration-skip-ink:none;">TQ-342</div>
<div class="t" style="left:108.60px;top:593px;font-size:14.83px;color:#000;transform:scaleX(0.9681);">Story</div>
<div class="t" style="left:269.80px;top:593px;font-size:14.24px;color:#1b5ded;transform:scaleX(0.9775);text-decoration:underline;text-decoration-skip-ink:none;">TQ-341</div>
<div class="t" style="left:108.60px;top:614px;font-size:14.83px;color:#000;transform:scaleX(0.9681);">Story</div>
<div class="t" style="left:269.80px;top:614px;font-size:14.24px;color:#1b5ded;transform:scaleX(0.9775);text-decoration:underline;text-decoration-skip-ink:none;">TQ-341</div>
<div class="t" style="left:108.60px;top:635px;font-size:14.83px;color:#000;transform:scaleX(0.9681);">Story</div>
<div class="t" style="left:269.80px;top:635px;font-size:14.24px;color:#1b5ded;transform:scaleX(0.9775);text-decoration:underline;text-decoration-skip-ink:none;">TQ-341</div>
<div class="t" style="left:108.60px;top:656px;font-size:14.83px;color:#000;transform:scaleX(0.9681);">Story</div>
<div class="t" style="left:269.80px;top:656px;font-size:14.24px;color:#1b5ded;transform:scaleX(0.9775);text-decoration:underline;text-decoration-skip-ink:none;">TQ-341</div>
<div class="t" style="left:108.60px;top:677px;font-size:14.83px;color:#000;transform:scaleX(0.9681);">Story</div>
<div class="t" style="left:269.80px;top:677px;font-size:14.24px;color:#1b5ded;transform:scaleX(0.9775);text-decoration:underline;text-decoration-skip-ink:none;">TQ-340</div>
<div class="t" style="left:108.60px;top:698px;font-size:14.83px;color:#000;transform:scaleX(0.9681);">Story</div>
<div class="t" style="left:269.80px;top:698px;font-size:14.24px;color:#1b5ded;transform:scaleX(0.9775);text-decoration:underline;text-decoration-skip-ink:none;">TQ-340</div>
<div class="t" style="left:108.60px;top:719px;font-size:14.83px;color:#000;transform:scaleX(0.9681);">Story</div>
<div class="t" style="left:269.80px;top:719px;font-size:14.24px;color:#1b5ded;transform:scaleX(0.9775);text-decoration:underline;text-decoration-skip-ink:none;">TQ-340</div>
<div class="t" style="left:108.60px;top:740px;font-size:14.83px;color:#000;transform:scaleX(0.9681);">Story</div>
<div class="t" style="left:269.80px;top:740px;font-size:14.24px;color:#1b5ded;transform:scaleX(0.9775);text-decoration:underline;text-decoration-skip-ink:none;">TQ-340</div>
<div class="t" style="left:453.80px;top:740px;font-size:14.53px;color:#000;transform:scaleX(0.9281);">33</div>
<div class="t" style="left:607.30px;top:740px;font-size:14.53px;color:#000;transform:scaleX(0.9729);">Lowest</div>
<div class="t" style="left:108.60px;top:761px;font-size:14.83px;color:#000;transform:scaleX(0.9681);">Story</div>
<div class="t" style="left:269.80px;top:761px;font-size:14.24px;color:#1b5ded;transform:scaleX(0.9775);text-decoration:underline;text-decoration-skip-ink:none;">TQ-339</div>
<div class="t" style="left:453.80px;top:761px;font-size:14.53px;color:#000;transform:scaleX(0.9281);">22</div>
<div class="t" style="left:607.30px;top:761px;font-size:14.53px;color:#000;transform:scaleX(0.9729);">Lowest</div>
<div class="t" style="left:108.60px;top:782px;font-size:14.83px;color:#000;transform:scaleX(0.9681);">Story</div>
<div class="t" style="left:269.80px;top:782px;font-size:14.24px;color:#1b5ded;transform:scaleX(0.9775);text-decoration:underline;text-decoration-skip-ink:none;">TQ-339</div>
<div class="t" style="left:453.80px;top:782px;font-size:14.53px;color:#000;transform:scaleX(0.9281);">22</div>
<div class="t" style="left:607.30px;top:782px;font-size:14.53px;color:#000;transform:scaleX(0.9729);">Lowest</div>
<div class="r" style="left:410px;top:209px;width:302px;height:522px;background:#fff;border-radius:4px;box-shadow:0 2px 6px 2px rgba(60,64,67,.15),0 1px 2px rgba(60,64,67,.22);"></div>
<div class="t" style="left:449.30px;top:226px;font-size:13.95px;color:#3c4043;transform:scaleX(0.9808);">Sort</div>
<div class="t" style="left:479.70px;top:226px;font-size:13.95px;color:#3c4043;transform:scaleX(0.8918);">A</div>
<svg class="r" style="left:492.5px;top:229.3px" width="14" height="7" viewBox="0 0 14 7"><path d="M0 3.5H12.5M9.5 0.8L12.8 3.5 9.5 6.2" stroke="#3c4043" stroke-width="1.1" fill="none"/></svg>
<div class="t" style="left:510.20px;top:226px;font-size:13.95px;color:#3c4043;transform:scaleX(0.9735);">Z</div>
<div class="t" style="left:449.30px;top:261px;font-size:13.95px;color:#3c4043;transform:scaleX(0.9808);">Sort</div>
<div class="t" style="left:479.70px;top:261px;font-size:13.95px;color:#3c4043;transform:scaleX(0.9735);">Z</div>
<svg class="r" style="left:492.5px;top:264.2px" width="14" height="7" viewBox="0 0 14 7"><path d="M0 3.5H12.5M9.5 0.8L12.8 3.5 9.5 6.2" stroke="#3c4043" stroke-width="1.1" fill="none"/></svg>
<div class="t" style="left:510.20px;top:261px;font-size:13.95px;color:#3c4043;transform:scaleX(0.8918);">A</div>
<div class="t" style="left:449.30px;top:296px;font-size:13.95px;color:#3c4043;transform:scaleX(1.0227);">Sort by color</div>
<svg class="r" style="left:688px;top:299px" width="8" height="8" viewBox="0 0 8 8"><path d="M0.5 0.5L7.5 4 0.5 7.5Z" fill="#5f6368"/></svg>
<div class="r" style="left:447px;top:326px;width:264px;height:1px;background:#dadce0;"></div>
<div class="t" style="left:448.90px;top:345px;font-size:13.95px;color:#3c4043;transform:scaleX(1.0281);">Filter by color</div>
<svg class="r" style="left:688px;top:348px" width="8" height="8" viewBox="0 0 8 8"><path d="M0.5 0.5L7.5 4 0.5 7.5Z" fill="#5f6368"/></svg>
<div class="r" style="left:440px;top:370px;width:118px;height:25px;overflow:hidden">
<div class="t" style="left:8.90px;top:7px;font-size:13.95px;color:#3c4043;transform:scaleX(1.0283);">Filter by condition</div>
</div>
<svg class="r" style="left:435px;top:380px" width="6" height="8" viewBox="0 0 6 8"><path d="M0.5 0.5L5 4 0.5 7.5Z" fill="#5f6368"/></svg>
<div class="t" style="left:448.90px;top:409px;font-size:13.95px;color:#3c4043;">Filter by values</div>
<svg class="r" style="left:434px;top:413px" width="8" height="5" viewBox="0 0 8 5"><path d="M0 0.3H8L4 4.5Z" fill="#5f6368"/></svg>
<div class="t" style="left:434.00px;top:441px;font-size:13.08px;color:#2a62d4;transform:scaleX(0.9475);text-decoration:underline;text-decoration-skip-ink:none;">Select all</div>
<div class="t" style="left:487.00px;top:441px;font-size:13.08px;color:#5f6368;">-</div>
<div class="t" style="left:493.80px;top:441px;font-size:13.08px;color:#2a62d4;transform:scaleX(0.9244);text-decoration:underline;text-decoration-skip-ink:none;">Clear</div>
<div class="r" style="left:428px;top:478px;width:252px;height:36px;border:1px solid #dadce0;border-radius:4px;"></div>
<svg class="r" style="left:657.6px;top:485.7px" width="20" height="20" viewBox="0 0 24 24"><path fill="#5f6368" d="M15.5 14h-.79l-.28-.27C15.41 12.59 16 11.11 16 9.5 16 5.91 13.090 3 9.5 3S3 5.91 3 9.5 5.91 16 9.5 16c1.61 0 3.09-.59 4.23-1.57l.27.28v.79l5 4.99L20.49 19l-4.99-5zm-6 0C7.01 14 5 11.99 5 9.5S7.01 5 9.5 5 14 7.01 14 9.5 11.99 14 9.5 14z"/></svg>
<div class="r" style="left:440px;top:544px;width:223px;height:30px;background:#d0d0d0;"></div>
<svg class="r" style="left:454.5px;top:522.6px" width="14" height="11" viewBox="0 0 14 11"><path d="M1 5.5L4.8 9.3 13 1.2" stroke="#202124" stroke-width="1.8" fill="none"/></svg>
<div class="t" style="left:477.60px;top:521px;font-size:13.37px;color:#3c4043;transform:scaleX(1.0593);">Custom</div>
<svg class="r" style="left:454.5px;top:554.6px" width="14" height="11" viewBox="0 0 14 11"><path d="M1 5.5L4.8 9.3 13 1.2" stroke="#202124" stroke-width="1.8" fill="none"/></svg>
<div class="t" style="left:477.60px;top:553px;font-size:13.37px;color:#3c4043;transform:scaleX(1.0696);">Highest</div>
<svg class="r" style="left:454.5px;top:586.6px" width="14" height="11" viewBox="0 0 14 11"><path d="M1 5.5L4.8 9.3 13 1.2" stroke="#202124" stroke-width="1.8" fill="none"/></svg>
<div class="t" style="left:477.60px;top:585px;font-size:13.37px;color:#3c4043;transform:scaleX(1.0717);">Lowest</div>
<svg class="r" style="left:454.5px;top:618.6px" width="14" height="11" viewBox="0 0 14 11"><path d="M1 5.5L4.8 9.3 13 1.2" stroke="#202124" stroke-width="1.8" fill="none"/></svg>
<div class="t" style="left:477.60px;top:617px;font-size:13.37px;color:#3c4043;transform:scaleX(1.0614);">prior</div>
<div class="r" style="left:675px;top:553px;width:8px;height:76px;background:#dadce0;border-radius:4px;"></div>
<div class="r" style="left:447px;top:656px;width:265px;height:1px;background:#dadce0;"></div>
<div class="r" style="left:511px;top:680px;width:97px;height:36px;border:1px solid #dadce0;border-radius:4px;"></div>
<div class="t" style="left:536.40px;top:690px;font-size:14.53px;color:#2e7442;transform:scaleX(1.0100);-webkit-text-stroke:0.25px #2e7442;">Cancel</div>
<div class="r" style="left:624px;top:680px;width:71px;height:36px;background:#2b7d3c;border-radius:4px;"></div>
<div class="t" style="left:648.60px;top:690px;font-size:14.53px;font-weight:bold;color:#fff;transform:scaleX(0.9632);">OK</div>
<svg class="r" style="left:0;top:0" width="749" height="794" viewBox="0 0 749 794">
<line x1="539" y1="220" x2="580" y2="540" stroke="#3f7f7b" stroke-width="4"/>
<path d="M573 538L580.3 540.5 587 535.8 582.6 559.5Z" fill="#3f7f7b"/>
<path d="M423 575L669 576" stroke="#3f7f7b" stroke-width="4"/>
</svg>
</body></html>
